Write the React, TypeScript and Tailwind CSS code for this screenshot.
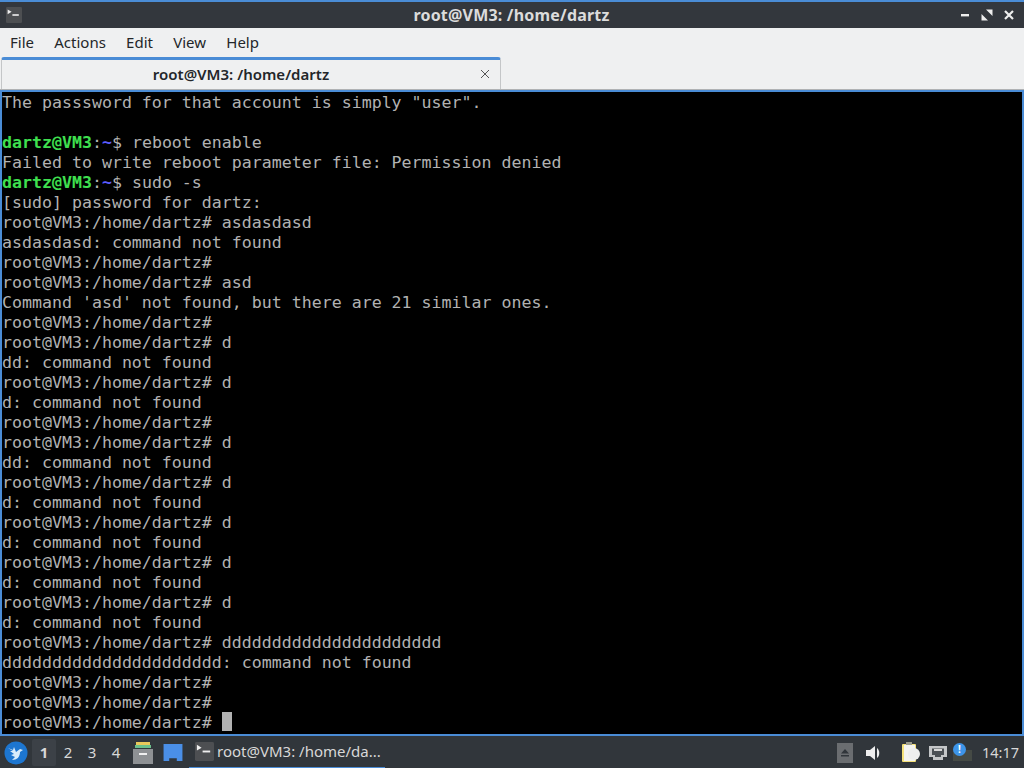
import React from 'react';

const LINES: (string | [string])[] = [
    'The passsword for that account is simply "user".',
    '',
    ['reboot enable'],
    'Failed to write reboot parameter file: Permission denied',
    ['sudo -s'],
    '[sudo] password for dartz:',
    'root@VM3:/home/dartz# asdasdasd',
    'asdasdasd: command not found',
    'root@VM3:/home/dartz#',
    'root@VM3:/home/dartz# asd',
    "Command 'asd' not found, but there are 21 similar ones.",
    'root@VM3:/home/dartz#',
    'root@VM3:/home/dartz# d',
    'dd: command not found',
    'root@VM3:/home/dartz# d',
    'd: command not found',
    'root@VM3:/home/dartz#',
    'root@VM3:/home/dartz# d',
    'dd: command not found',
    'root@VM3:/home/dartz# d',
    'd: command not found',
    'root@VM3:/home/dartz# d',
    'd: command not found',
    'root@VM3:/home/dartz# d',
    'd: command not found',
    'root@VM3:/home/dartz# d',
    'd: command not found',
    'root@VM3:/home/dartz# dddddddddddddddddddddd',
    'dddddddddddddddddddddd: command not found',
    'root@VM3:/home/dartz#',
    'root@VM3:/home/dartz#',
];

const TerminalIcon = ({ className }: { className: string }) => (
    <svg viewBox="0 0 20 20" className={className}>
        <rect width="20" height="20" rx="1.5" fill="#4d4f52" />
        <path d="M2 3l5 3-5 3z" fill="#eeeeee" />
        <rect x="8" y="9" width="8" height="2" fill="#eeeeee" />
    </svg>
);

const App: React.FC = () => {
    return (
        <div className="w-[1024px] h-[768px] flex flex-col overflow-hidden bg-[#31363b] font-['Noto_Sans',sans-serif]">
            {/* Title bar */}
            <div className="h-[28px] shrink-0 border-t-2 border-[#4a8cd6] bg-[#33373d] flex items-center justify-between pl-[5px] pr-[8px]">
                <TerminalIcon className="w-[18px] h-[16px]" />
                <span className="text-[16px] font-bold tracking-[0.2px] text-[#dcdcdc] ml-[42px]">root@VM3: /home/dartz</span>
                <div className="flex items-center gap-[8px]">
                    <svg viewBox="0 0 14 14" className="w-[14px] h-[14px]"><rect x="3" y="6" width="8" height="2.4" fill="#eeeeee" /></svg>
                    <svg viewBox="0 0 14 14" className="w-[14px] h-[14px]"><path d="M6 1.5h6.500v6.500zM1.500 6l6.500 6.500h-6.500z" fill="#eeeeee" /></svg>
                    <svg viewBox="0 0 14 14" className="w-[14px] h-[14px]"><path d="M3 3l8 8M11 3l-8 8" stroke="#eeeeee" strokeWidth="2.200" /></svg>
                </div>
            </div>

            {/* Menu bar */}
            <div className="h-[29px] shrink-0 bg-[#eff0f1] flex items-center pl-[10px] gap-[20.25px] text-[15px] text-[#232629]">
                <span>File</span>
                <span>Actions</span>
                <span>Edit</span>
                <span>View</span>
                <span>Help</span>
            </div>

            {/* Tab bar */}
            <div className="h-[33px] shrink-0 bg-[#eff0f1] border-b border-[#b0b2b4] flex items-stretch">
                <div className="w-[500px] ml-[1px] pr-[20px] border-t-[3px] border-x border-t-[#4a8cd6] border-x-[#c4c6c8] rounded-t-[3px] flex items-center justify-center relative bg-[#eff0f1]">
                    <span className="text-[15px] font-semibold text-[#232629]">root@VM3: /home/dartz</span>
                    <svg viewBox="0 0 10 10" className="absolute right-[10px] top-[9px] w-[10px] h-[10px]"><path d="M1 1l8 8M9 1l-8 8" stroke="#555555" strokeWidth="1" /></svg>
                </div>
            </div>

            {/* Terminal */}
            <div className="h-[646px] shrink-0 pt-[1px] bg-black border-x-2 border-t-2 border-b-2 border-[#4a8cd6] overflow-hidden font-['DejaVu_Sans_Mono',monospace] text-[16.6px] leading-[20px] text-[#b2b2b2] whitespace-pre">
                {LINES.map((line, i) => (
                    <div key={i} className="h-[20px]">
                        {typeof line === 'string' ? line : (
                            <>
                                <span className="font-bold text-[#3fe04f]">dartz@VM3</span>
                                <span>:</span>
                                <span className="font-bold text-[#5c5cff]">~</span>
                                <span>$ {line[0]}</span>
                            </>
                        )}
                    </div>
                ))}
                <div className="h-[20px] flex">
                    <span>root@VM3:/home/dartz# </span>
                    <span className="w-[10px] h-[19px] -mt-[1px] bg-[#b2b2b2]"></span>
                </div>
            </div>

            {/* Taskbar */}
            <div className="flex-1 flex items-center bg-[#31363b] text-[#d8d8d8]">
                <svg viewBox="0 0 24 24" className="w-[24px] h-[24px] ml-[4px]">
                    <circle cx="12" cy="12" r="11.500" fill="#1d76d0" />
                    <path d="M4 7l5 2 1-3 2 5 4-3 3 1-3 2c0 5-3 8-8 8l3-3-4-2 3-1-4-3 3 0z" fill="#d8ecfb" />
                </svg>
                <div className="flex ml-[4px] text-[15px]">
                    <span className="w-[24px] h-[27px] flex items-center justify-center bg-[#3c4147] rounded-[2px] font-bold">1</span>
                    <span className="w-[24px] h-[27px] flex items-center justify-center">2</span>
                    <span className="w-[24px] h-[27px] flex items-center justify-center">3</span>
                    <span className="w-[24px] h-[27px] flex items-center justify-center">4</span>
                </div>
                <svg viewBox="0 0 20 22" className="w-[20px] h-[22px] ml-[5px]">
                    <rect x="3" y="0" width="14" height="3" fill="#e9c85a" />
                    <rect x="2" y="3" width="16" height="3" fill="#6cc08b" />
                    <path d="M0 7h20v15H0z" fill="#8e9194" />
                    <rect x="6" y="11" width="8" height="2" fill="#f0f0f0" />
                </svg>
                <svg viewBox="0 0 20 18" className="w-[20px] h-[17px] ml-[10px]">
                    <path d="M0 0h20v18h-6v-3H6v3H0z" fill="#4a8fe7" />
                </svg>
                <div className="relative ml-[6px] w-[196px] h-[33px] flex items-center border-b-2 border-[#4a8cd6]">
                    <TerminalIcon className="w-[19px] h-[19px] ml-[6px]" />
                    <span className="ml-[3px] text-[15px] text-[#d8d8d8]">root@VM3: /home/da...</span>
                </div>
                <div className="flex-1"></div>
                <div className="w-[16px] h-[20px] bg-[#6a6d70] flex items-center justify-center mr-[12px]">
                    <svg viewBox="0 0 10 8" className="w-[10px] h-[8px]"><path d="M5 0l4 4.500H1z M1 6h8v1.500H1z" fill="#31363b" /></svg>
                </div>
                <svg viewBox="0 0 18 18" className="w-[18px] h-[18px] mr-[18px]">
                    <path d="M1 6h4l5-4v14l-5-4H1z" fill="#eeeeee" />
                    <path d="M12 4c3 2 3 8 0 10z" fill="#eeeeee" />
                </svg>
                <svg viewBox="0 0 20 22" className="w-[20px] h-[22px] mr-[7px]">
                    <rect x="1" y="2" width="14" height="18" rx="1" fill="#f6e27a" />
                    <rect x="3" y="3" width="11" height="16" fill="#f4f4f0" />
                    <rect x="5" y="0" width="6" height="3" fill="#9a9a8c" />
                    <circle cx="13" cy="12" r="6" fill="#eeeeee" />
                </svg>
                <svg viewBox="0 0 20 18" className="w-[20px] h-[18px] mr-[4px]">
                    <path d="M1 2h18v11h-4v3H5v-3H1z" fill="#c4c6c8" />
                    <path d="M4 4.500h12v6.500h-3v2H7v-2H4z" fill="#4b5055" />
                    <path d="M6 5h8v2H6z" fill="#d8d8d8" />
                </svg>
                <div className="relative w-[20px] h-[20px] mr-[10px]">
                    <div className="absolute left-[1px] bottom-[2px] w-[19px] h-[11px] bg-[#454a45]"></div>
                    <div className="absolute left-[1px] top-0 w-[13px] h-[13px] rounded-full bg-[#3d94e8] text-white text-[10px] font-bold leading-[13px] text-center">!</div>
                </div>
                <span className="text-[14.5px] text-[#d8d8d8] mr-[5px]">14:17</span>
            </div>
        </div>
    );
};

export default App;
